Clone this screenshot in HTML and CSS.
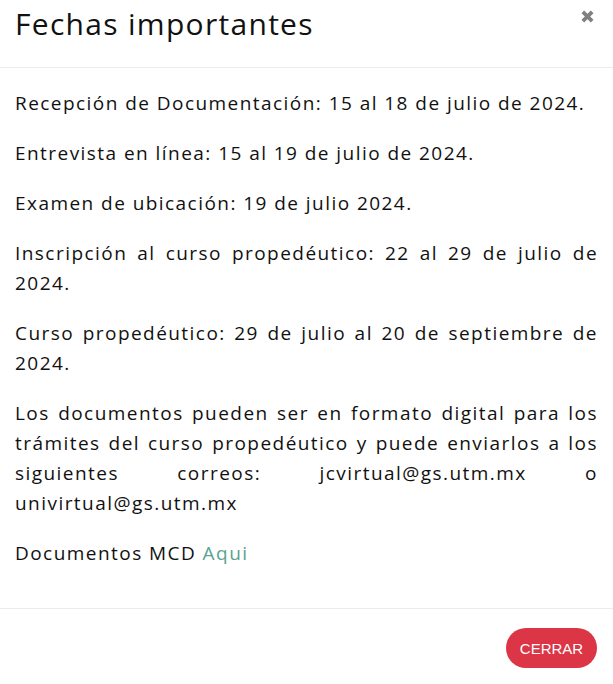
FILE: index.html
```html
<!DOCTYPE html>
<html lang="es">
<head>
<meta charset="utf-8">
<title>Fechas importantes</title>
<link rel="stylesheet" href="styles.css">
</head>
<body>
<div class="modal">
  <header class="modal-header">
    <h2 class="modal-title">Fechas importantes</h2>
    <button class="close" type="button" aria-label="Cerrar">
      <svg viewBox="0 0 16 16" width="15" height="15" aria-hidden="true">
        <path d="M3 3 L13 13 M13 3 L3 13" stroke="#808080" stroke-width="4" stroke-linecap="butt"/>
      </svg>
    </button>
  </header>
  <main class="modal-body">
    <p>Recepción de Documentación: 15 al 18 de julio de 2024.</p>
    <p>Entrevista en línea: 15 al 19 de julio de 2024.</p>
    <p>Examen de ubicación: 19 de julio 2024.</p>
    <p>Inscripción al curso propedéutico: 22 al 29 de julio de 2024.</p>
    <p>Curso propedéutico: 29 de julio al 20 de septiembre de 2024.</p>
    <p>Los documentos pueden ser en formato digital para los trámites del curso propedéutico y puede enviarlos a los siguientes correos: jcvirtual@gs.utm.mx o univirtual@gs.utm.mx</p>
    <p>Documentos MCD <a class="link" href="#">Aqui</a></p>
  </main>
  <footer class="modal-footer">
    <button class="btn-cerrar" type="button">CERRAR</button>
  </footer>
</div>
</body>
</html>
```
FILE: styles.css
```css
html, body {
  margin: 0;
  padding: 0;
  background: #ffffff;
}
body {
  font-family: "Open Sans", "Liberation Sans", sans-serif;
  color: #111111;
}
.modal {
  width: 613px;
  min-height: 684px;
  display: flex;
  flex-direction: column;
}
.modal-header {
  display: flex;
  justify-content: space-between;
  align-items: flex-start;
  padding: 5px 15px 0 15px;
  height: 62px;
  border-bottom: 1px solid #e9ecef;
  box-sizing: border-box;
  height: 68px;
}
.modal-title {
  margin: 0;
  font-size: 30px;
  font-weight: 400;
  line-height: 38px;
  letter-spacing: 1.3px;
}
.close {
  border: 0;
  background: none;
  padding: 0;
  margin: 4px 3px 0 0;
  width: 15px;
  height: 15px;
  display: block;
}
.close svg {
  display: block;
}
.modal-body {
  padding: 20px 15px 20px 15px;
}
.modal-body p {
  margin: 0 0 20px 0;
  font-size: 19px;
  line-height: 30px;
  text-align: justify;
  letter-spacing: 1.45px;
}
.link {
  color: #5aa391;
  text-decoration: none;
}
.modal-footer {
  border-top: 1px solid #e9ecef;
  display: flex;
  justify-content: flex-end;
  padding: 19px 16px 16px 16px;
}
.btn-cerrar {
  background: #dc3545;
  color: #ffffff;
  border: 0;
  border-radius: 20px;
  width: 91px;
  height: 40px;
  font-family: "Liberation Sans", Arial, sans-serif;
  font-size: 15px;
  letter-spacing: 0;
  padding: 0;
}
```
